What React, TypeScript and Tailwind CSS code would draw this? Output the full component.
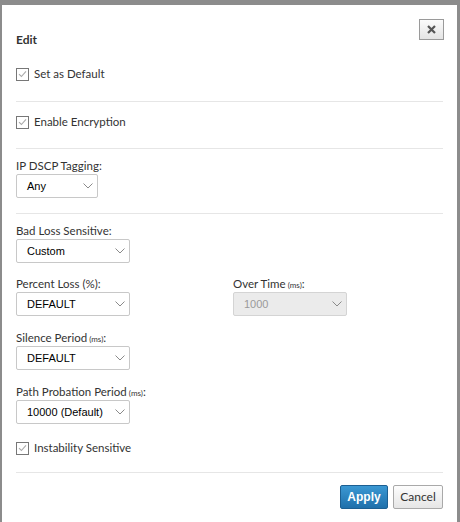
import React from "react";

const labelFont = { fontFamily: 'Lato, "Noto Sans", sans-serif' };

function Check({ label }: { label: string }) {
  return (
    <label className="flex items-center gap-[5px] h-4 text-[11.5px] text-[#333]" style={labelFont}>
      <span className="w-[13px] h-[13px] border border-[#777] bg-white flex items-center justify-center">
        <svg width="9" height="8" viewBox="0 0 9 8" fill="none">
          <path d="M1 4.2 L3.4 6.5 L8 1.3" stroke="#aaa" strokeWidth="1.1" />
        </svg>
      </span>
      {label}
    </label>
  );
}

function Chevron() {
  return (
    <svg width="10" height="6" viewBox="0 0 10 6" fill="none">
      <path d="M0.5 0.5 L5 5 L9.5 0.5" stroke="#8a8a8a" strokeWidth="1" />
    </svg>
  );
}

function Select({ value, width, disabled }: { value: string; width: string; disabled?: boolean }) {
  return (
    <div
      className={`${width} h-6 border rounded-[2px] flex items-center justify-between pl-[10px] pr-[4px] text-[11px] ${
        disabled ? "bg-[#ebebeb] border-[#d4d4d4] text-[#9a9a9a]" : "bg-white border-[#c8c8c8] text-black"
      }`}
      style={{ fontFamily: '"Liberation Sans", Arial, sans-serif' }}
    >
      <span>{value}</span>
      <Chevron />
    </div>
  );
}

function Field({ label, unit, children }: { label: string; unit?: string; children: React.ReactNode }) {
  return (
    <div className="flex flex-col">
      <div className="h-4 leading-4 text-[11.5px] text-[#333]" style={labelFont}>
        {label}
        {unit && <span className="text-[8px]"> ({unit})</span>}
        {unit && ":"}
      </div>
      {children}
    </div>
  );
}

export default function App() {
  return (
    <div className="w-[460px] h-[522px] bg-[#8c8c8c] pt-[5px] pl-[2px] pr-[3px] overflow-hidden">
      <div className="relative bg-white h-full px-[14px] pt-[27px]">
        {/* close */}
        <button className="absolute top-[14px] right-[13px] w-[25px] h-[21px] border border-[#9a9a9a] bg-gradient-to-b from-[#fbfbfb] to-[#e4e4e4] flex items-center justify-center">
          <svg width="9" height="9" viewBox="0 0 9 9">
            <path d="M1 1 L8 8 M8 1 L1 8" stroke="#555" strokeWidth="2.2" />
          </svg>
        </button>

        <div className="h-4 leading-4 text-[12px] font-bold text-[#333]" style={labelFont}>Edit</div>

        <div className="mt-[18px]"><Check label="Set as Default" /></div>
        <div className="mt-[19px] h-px bg-[#e6e6e6]" />

        <div className="mt-[12px]"><Check label="Enable Encryption" /></div>
        <div className="mt-[18px] h-px bg-[#e6e6e6]" />

        <div className="mt-[9px]">
          <Field label="IP DSCP Tagging:">
            <Select value="Any" width="w-[82px]" />
          </Field>
        </div>
        <div className="mt-[15px] h-px bg-[#e6e6e6]" />

        <div className="mt-[9px]">
          <Field label="Bad Loss Sensitive:">
            <Select value="Custom" width="w-[114px]" />
          </Field>
        </div>

        <div className="mt-[13px] flex">
          <div className="w-[217px]">
            <Field label="Percent Loss (%):">
              <Select value="DEFAULT" width="w-[114px]" />
            </Field>
          </div>
          <Field label="Over Time" unit="ms">
            <Select value="1000" width="w-[114px]" disabled />
          </Field>
        </div>

        <div className="mt-[14px]">
          <Field label="Silence Period" unit="ms">
            <Select value="DEFAULT" width="w-[114px]" />
          </Field>
        </div>

        <div className="mt-[14px]">
          <Field label="Path Probation Period" unit="ms">
            <Select value="10000 (Default)" width="w-[114px]" />
          </Field>
        </div>

        <div className="mt-[16px]"><Check label="Instability Sensitive" /></div>
        <div className="mt-[16px] h-px bg-[#e6e6e6]" />

        <div className="mt-[12px] flex justify-end gap-[5px]" style={{ fontFamily: '"Liberation Sans", Arial, sans-serif' }}>
          <button className="w-[48px] h-[24px] rounded-[2px] border border-[#1c5f92] bg-gradient-to-b from-[#3b98d3] to-[#1f70ab] text-white text-[12px] font-bold">
            Apply
          </button>
          <button
            className="w-[50px] h-[24px] rounded-[2px] border border-[#a9a9a9] bg-gradient-to-b from-[#fdfdfd] to-[#e6e6e6] text-[#333] text-[12px]"
            style={labelFont}
          >
            Cancel
          </button>
        </div>
      </div>
    </div>
  );
}
